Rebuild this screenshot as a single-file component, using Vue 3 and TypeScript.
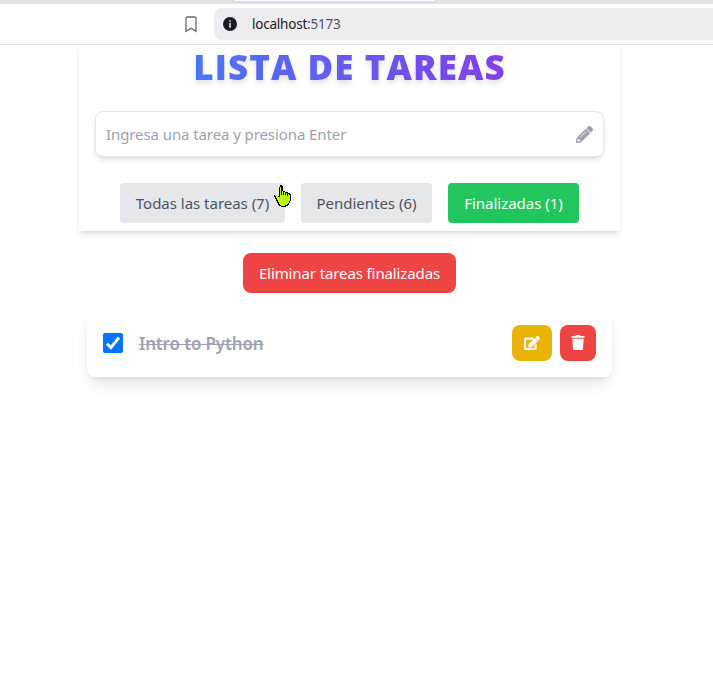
<script setup lang="ts">
import { ref } from 'vue'

interface Filter {
  key: string
  label: string
  count: number
}

const filters: Filter[] = [
  { key: 'all', label: 'Todas las tareas', count: 7 },
  { key: 'pending', label: 'Pendientes', count: 6 },
  { key: 'finished', label: 'Finalizadas', count: 1 },
]
const active = ref('finished')
const tasks = ref([{ id: 1, title: 'Intro to Python', done: true }])
</script>

<template>
  <div class="window">
    <div class="browser">
      <div class="tabs"><span class="tab"></span></div>
      <div class="toolbar">
        <svg class="bookmark" viewBox="0 0 12 17"><path d="M2.500 1h7Q11 1 11 2.500v12.800L6 12.200 1 15.300V2.500Q1 1 2.500 1Z" /></svg>
        <div class="address">
          <svg class="info" viewBox="0 0 14 14">
            <circle cx="7" cy="7" r="7" fill="#1d1b22" />
            <path d="M6 3.200h2v1.600H6zM6 6h2v4.700H6z" fill="#b9b8bf" />
          </svg>
          <span class="url">localhost<i>:5173</i></span>
        </div>
      </div>
    </div>

    <main class="page">
      <header class="head">
        <h1>LISTA DE TAREAS</h1>
        <div class="field">
          <input type="text" placeholder="Ingresa una tarea y presiona Enter" />
          <svg class="pencil" viewBox="0 0 512 512"><path d="M497.900 142.100l-46.100 46.100c-4.700 4.700-12.300 4.700-17 0l-111-111c-4.700-4.700-4.700-12.300 0-17l46.100-46.100c18.700-18.700 49.100-18.700 67.900 0l60.100 60.100c18.800 18.700 18.800 49.100 0 67.900zM284.200 99.800L21.600 362.400.4 483.900c-2.900 16.400 11.400 30.600 27.800 27.800l121.500-21.300 262.600-262.600c4.700-4.700 4.700-12.300 0-17l-111-111c-4.800-4.700-12.400-4.700-17.100 0zM124.100 339.900c-5.500-5.500-5.500-14.300 0-19.800l154-154c5.500-5.500 14.300-5.500 19.800 0s5.500 14.300 0 19.800l-154 154c-5.500 5.500-14.300 5.500-19.800 0zM88 424h48v36.300l-64.500 11.300-31.100-31.100L51.700 376H88v48z" /></svg>
        </div>
        <nav class="filters">
          <button v-for="f in filters" :key="f.key" :class="[f.key, { active: active === f.key }]" @click="active = f.key">
            {{ f.label }} ({{ f.count }})
          </button>
        </nav>
      </header>

      <button class="clear">Eliminar tareas finalizadas</button>

      <ul class="list">
        <li v-for="t in tasks" :key="t.id" class="task">
          <button class="check" role="checkbox" :aria-checked="t.done" @click="t.done = !t.done">
            <svg v-if="t.done" viewBox="0 0 20 20"><path d="M4 10.700l3.900 3.900L15.900 4.600" /></svg>
          </button>
          <span class="title" :class="{ done: t.done }">{{ t.title }}</span>
          <button class="edit">
            <svg viewBox="0 0 576 512"><path d="M402.600 83.200l90.200 90.200c3.800 3.800 3.800 10 0 13.800L274.400 405.600l-92.800 10.300c-12.400 1.400-22.900-9.100-21.500-21.500l10.300-92.800L388.800 83.200c3.800-3.800 10-3.800 13.800 0zm162-22.900l-48.800-48.800c-15.200-15.200-39.900-15.200-55.200 0l-35.400 35.400c-3.800 3.800-3.800 10 0 13.800l90.200 90.200c3.800 3.800 10 3.800 13.800 0l35.400-35.400c15.200-15.300 15.200-40 0-55.200zM384 346.200V448H64V128h229.800c3.200 0 6.200-1.300 8.500-3.500l40-40c7.600-7.600 2.200-20.500-8.500-20.500H48C21.500 64 0 85.500 0 112v352c0 26.500 21.500 48 48 48h352c26.500 0 48-21.500 48-48V306.200c0-10.700-12.900-16-20.500-8.500l-40 40c-2.200 2.300-3.500 5.300-3.500 8.500z" /></svg>
          </button>
          <button class="trash">
            <svg viewBox="0 0 448 512"><path d="M432 32H312l-9.400-18.700A24 24 0 0 0 281.100 0H166.800a23.700 23.700 0 0 0-21.400 13.300L136 32H16A16 16 0 0 0 0 48v32a16 16 0 0 0 16 16h416a16 16 0 0 0 16-16V48a16 16 0 0 0-16-16zM53.200 467a48 48 0 0 0 47.900 45h245.800a48 48 0 0 0 47.900-45L416 128H32z" /></svg>
          </button>
        </li>
      </ul>
    </main>

    <svg class="cursor" viewBox="0 0 17 22" shape-rendering="crispEdges">
      <path d="M6 0h2v1h1v5h2v1h3v1h2v1h1v7h-1v2h-1v2h-1v1h-2v1H7v-1H5v-1H4v-2H3v-2H2v-2H1v-2H0v-2h3v1h2V2h1z" fill="#000" />
      <path d="M6 2h1v8h1V6h1v4h1V7h1v3h1V8h1v3h1V9h1v1h1v6h-1v2h-1v1h-1v1h-2v1H7v-1H6v-1H5v-2H4v-2H3v-2H2v-2H1v-1h2v1h1v1h2z" fill="#b8ff00" />
    </svg>
  </div>
</template>

<style>
body {
  margin: 0;
  background: #fff;
}
</style>

<style scoped>
* {
  box-sizing: border-box;
}
.window {
  position: relative;
  height: 679px;
  overflow: hidden;
  font-family: 'Noto Sans', 'Open Sans', sans-serif;
}
button {
  border: 0;
  padding: 0;
  font: inherit;
  display: flex;
  align-items: center;
  justify-content: center;
  white-space: nowrap;
}
.browser {
  position: relative;
  z-index: 2;
  height: 45px;
  background: #fff;
  border-bottom: 1px solid #e2e1e6;
}
.tabs {
  height: 4px;
  padding-left: 234px;
  background: #e3e2e7;
}
.tab {
  display: block;
  width: 200px;
  height: 1px;
  background: #fff;
  box-shadow: 0 0 2px #bbb;
}
.toolbar {
  display: flex;
  align-items: center;
  height: 40px;
  padding-left: 185px;
}
.bookmark {
  width: 12px;
  height: 17px;
  margin-right: 17px;
  fill: none;
  stroke: #68676d;
  stroke-width: 1.300;
}
.address {
  display: flex;
  align-items: center;
  flex: 1;
  height: 32px;
  padding-left: 9px;
  border-radius: 8px 0 0 8px;
  background: #edecf1;
}
.info {
  width: 14px;
  height: 14px;
  margin-right: 15px;
}
.url {
  font-size: 13.500px;
  line-height: 20px;
  letter-spacing: -0.220px;
  color: #1d1b22;
}
.url i {
  font-style: normal;
  color: #55535c;
}
.page {
  width: 541px;
  margin-left: 79px;
}
.head {
  display: flex;
  flex-direction: column;
  height: 186px;
  padding: 0 16px 8px;
  box-shadow: 0 4px 6px -1px rgba(0, 0, 0, 0.1), 0 2px 4px -2px rgba(0, 0, 0, 0.1);
}
h1 {
  align-self: center;
  margin: 2px 0 24px;
  font-family: 'Open Sans', 'Noto Sans', sans-serif;
  font-size: 35px;
  line-height: 40px;
  font-weight: 800;
  letter-spacing: 1.050px;
  white-space: nowrap;
  color: transparent;
  background: linear-gradient(to right, #4c74f6, #8140e9);
  -webkit-background-clip: text;
  background-clip: text;
  filter: drop-shadow(0 4px 3px rgba(0, 0, 0, 0.07)) drop-shadow(0 2px 2px rgba(0, 0, 0, 0.06));
}
.field {
  display: flex;
  align-items: center;
  flex: none;
  height: 46px;
  padding: 0 10px;
  border: 1px solid #e5e7eb;
  border-radius: 8px;
  background: #fff;
  box-shadow: 0 4px 6px -1px rgba(0, 0, 0, 0.1), 0 2px 4px -2px rgba(0, 0, 0, 0.1);
}
input {
  flex: 1;
  min-width: 0;
  padding: 0;
  border: 0;
  outline: 0;
  font: 15px/24px 'Noto Sans', 'Open Sans', sans-serif;
  letter-spacing: -0.090px;
  background: transparent;
}
input::placeholder {
  color: #9ca3af;
}
.pencil {
  width: 17px;
  height: 17px;
  fill: #9ca3af;
  stroke: #9ca3af;
  stroke-width: 12;
}
.filters {
  display: flex;
  justify-content: center;
  gap: 16px;
  margin-top: auto;
}
.filters button {
  width: 131px;
  height: 40px;
  border-radius: 4px;
  font-size: 15px;
  letter-spacing: -0.020px;
  color: #4b5563;
  background: #e5e7eb;
}
.filters .all {
  width: 165px;
}
.filters .active {
  color: #fff;
  background: #22c55e;
}
.clear {
  width: 213px;
  height: 40px;
  margin: 22px auto 16px;
  border-radius: 8px;
  font-size: 15px;
  letter-spacing: -0.110px;
  color: #fff;
  background: #ef4444;
}
.list {
  margin: 0;
  padding: 0 8px;
  list-style: none;
}
.task {
  display: flex;
  align-items: center;
  height: 68px;
  padding: 0 16px;
  border-radius: 8px;
  background: #fff;
  box-shadow: 0 10px 15px -3px rgba(0, 0, 0, 0.1), 0 4px 6px -4px rgba(0, 0, 0, 0.1);
}
.check {
  width: 20px;
  height: 20px;
  border-radius: 2px;
  background: #0075ff;
}
.check svg {
  width: 20px;
  height: 20px;
  fill: none;
  stroke: #fff;
  stroke-width: 3;
}
.title {
  flex: 1;
  margin-left: 16px;
  padding-top: 1px;
  font-size: 17px;
  line-height: 28px;
  letter-spacing: -0.140px;
  font-weight: 600;
  color: #9ca3af;
}
.done {
  text-decoration: line-through;
  text-decoration-thickness: 1px;
}
.edit,
.trash {
  width: 40px;
  height: 36px;
  border-radius: 8px;
  background: #eab308;
}
.trash {
  width: 36px;
  margin-left: 8px;
  background: #ef4444;
}
.edit svg {
  width: 16px;
  height: 14px;
  fill: #fff;
  stroke: #fff;
  stroke-width: 14;
}
.trash svg {
  width: 14px;
  height: 15px;
  margin-bottom: 1px;
  fill: #fff;
}
.cursor {
  position: absolute;
  z-index: 3;
  left: 274px;
  top: 185px;
  width: 17px;
  height: 22px;
}
</style>
